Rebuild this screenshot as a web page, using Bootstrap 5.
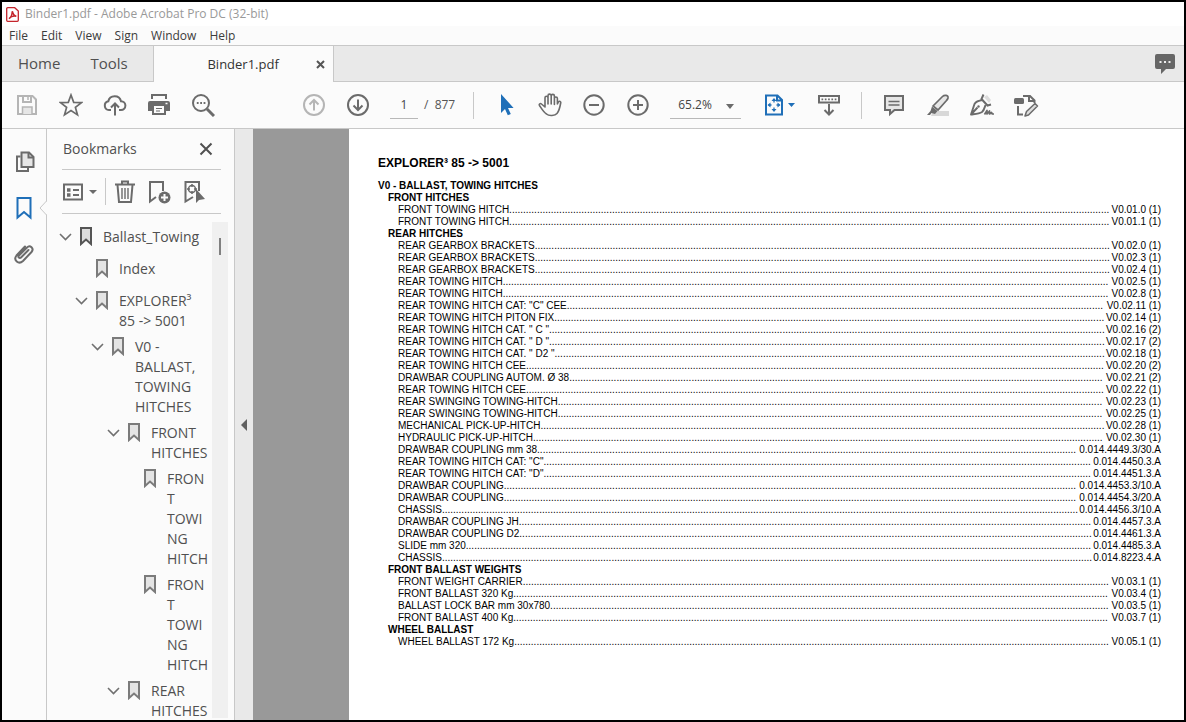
<!DOCTYPE html>
<html lang="en">
<head>
<meta charset="utf-8">
<meta name="viewport" content="width=device-width, initial-scale=1">
<title>Binder1.pdf - Adobe Acrobat Pro DC (32-bit)</title>
<link rel="stylesheet" href="https://cdn.jsdelivr.net/npm/bootstrap@5.3.0/dist/css/bootstrap.min.css">
<style>
  :root { --ink: #6b6b6b; --line: #c8c8c8; --blue: #1f6fb8; --chrome: #fbfbfb; }
  body { font-family: "Open Sans", "Noto Sans", sans-serif; color: #444; background: var(--chrome); border: 2px solid #000; font-size: 12px; line-height: 20px; }
  button, select, input { font: inherit; color: inherit; }
  button { background: none; border: 0; padding: 0; }
  svg { display: block; fill: none; stroke: currentColor; stroke-width: 2; flex: none; }
  a { color: inherit; text-decoration: none; }

  .title-bar { height: 24px; color: #999; background: #fff; padding-left: 4px; gap: 6px; }
  .menu-bar { height: 19px; padding-left: 7px; gap: 13px; line-height: 18px; color: #3c3c3c; }

  .tab-strip { height: 37px; background: #e9e9e9; border-top: 1px solid var(--line); border-bottom: 1px solid var(--line); }
  .tab-strip .app-tab { font-size: 15px; color: #505050; padding: 0 26px 2px 16px; }
  .tab-strip .app-tab + .app-tab { padding: 0 25px 2px 4px; }
  .doc-tab { width: 181px; height: 36px; margin-bottom: -1px; background: var(--chrome); border: 1px solid var(--line); border-width: 0 1px; font-size: 13px; color: #333; }
  .doc-tab button { color: #555; }

  .tool-bar { height: 47px; border-bottom: 1px solid var(--line); color: var(--ink); }
  .tool { width: 44px; height: 46px; display: flex; align-items: center; justify-content: center; flex: none; }
  .file-tools { margin-left: 3px; }
  .page-tools { margin: 0 10px 0 67px; }
  .page-total { margin: 0 18px 0 6px; color: #555; }
  .view-tools, .note-tools { margin-left: 10px; }
  .scroll-tool { margin: 0 10px 0 6px; }
  .is-off { color: #b5b5b5; }
  .is-blue { color: var(--blue); }
  .rule { width: 1px; height: 27px; background: var(--line); flex: none; }
  .field { height: 27px; border: 0; border-bottom: 1px solid #b8b8b8; background: none; border-radius: 0; padding: 0; color: #444; appearance: none; }
  .page-field { width: 28px; text-align: center; }
  .zoom-wrap { width: 71px; margin: 0 16px 0 10px; }
  .zoom-wrap .field { width: 100%; padding-left: 8px; }
  .zoom-wrap svg { right: 7px; top: 12px; pointer-events: none; }
  svg.caret { fill: currentColor; stroke: none; }

  .rail { width: 45px; border-right: 1px solid var(--line); padding: 10px 0 0; color: var(--ink); }
  .rail button { width: 44px; height: 46px; display: flex; align-items: center; justify-content: center; }
  .notch { right: -1px; top: 72px; }
  .panel { width: 188px; border-right: 1px solid var(--line); }
  .panel-head { height: 41px; margin: 0 13px 0 15px; border-bottom: 1px solid var(--line); font-size: 14px; color: #505050; padding: 0 8px 0 1px; }
  .panel-tools { height: 44px; margin: 0 13px 0 15px; border-bottom: 1px solid var(--line); color: var(--ink); }
  .tree-wrap { padding-top: 7px; }
  .tree { font-size: 14px; color: #505050; padding: 3px 2px 0 10px; min-width: 0; }
  .tree ul { list-style: none; margin: 0; padding-left: 16px; }
  .tree-row { display: flex; min-height: 32px; padding: 3px 0; align-items: flex-start; }
  .tree-row .twist { width: 16px; height: 20px; margin-right: 6px; color: #707070; display: flex; align-items: center; justify-content: center; flex: none; }
  .tree-row a { flex: 1; min-width: 0; margin-left: 10px; overflow-wrap: anywhere; }
  .tree-row > svg { stroke: #7b7b7b; fill: #e4e4e4; margin-top: -1px; }
  .tree-row.is-current > svg { stroke: #555; fill: #dcdcdc; }
  .scroll-track { width: 16px; margin: 1px 6px 2px 0; background: #f0f0f0; }
  .scroll-thumb { width: 2px; height: 17px; margin: 16px 0 0 7px; background: #808080; }

  .collapse-strip { width: 18px; background: #e9e9e9; color: #606060; padding-right: 1px; }
  .desk { background: #999; padding-left: 96px; min-width: 0; }
  .sheet { background: #fff; color: #000; font: 10px/12px "Liberation Sans", Arial, sans-serif; padding: 27px 23px 0 29px; }
  .sheet h1 { font-size: 12px; line-height: 14px; font-weight: 700; margin: 0 0 10px; }
  .sheet h2, .sheet h3 { font-size: 10px; line-height: 12px; font-weight: 700; margin: 0; }
  .sheet h3 { padding-left: 10px; }
  .sheet ul { list-style: none; margin: 0; padding: 0 0 0 20px; }
  .sheet li a { display: flex; white-space: nowrap; }
  .leader { flex: 1 1 0; min-width: 0; }
</style>
</head>
<body class="vh-100 d-flex flex-column overflow-hidden">

<header>
  <div class="title-bar d-flex align-items-center">
    <svg width="13" height="15" viewBox="0 0 13 15" style="color:#c4242b"><path stroke-width="1.3" fill="#fff" d="M1.7.7h7L12.300 4v9.300a1 1 0 0 1-1 1H1.700a1 1 0 0 1-1-1V1.700a1 1 0 0 1 1-1z"/><path stroke-width="1.500" d="M3 11.500c1.500-.5 3-3.500 3.300-7.200C7 7 8 9 10.300 9.300 8 8.500 5 9.500 3 11.500z"/></svg>
    <span>Binder1.pdf - Adobe Acrobat Pro DC (32-bit)</span>
  </div>
  <nav class="menu-bar d-flex align-items-center" aria-label="Menu">
    <button>File</button><button>Edit</button><button>View</button><button>Sign</button><button>Window</button><button>Help</button>
  </nav>
  <nav class="tab-strip d-flex" aria-label="Tabs">
    <button class="app-tab">Home</button>
    <button class="app-tab">Tools</button>
    <div class="doc-tab d-flex align-items-center position-relative justify-content-center">
      <span>Binder1.pdf</span>
      <button class="position-absolute end-0 me-2" aria-label="Close tab"><svg width="9" height="9" viewBox="0 0 9 9"><path d="M1 1l7 7M8 1L1 8"/></svg></button>
    </div>
    <button class="ms-auto me-2" style="color:#666" aria-label="Comments"><svg width="22" height="22" viewBox="0 0 22 22"><path fill="currentColor" stroke="none" d="M3 1h16a2 2 0 0 1 2 2v11a2 2 0 0 1-2 2h-7l-5 5v-5H3a2 2 0 0 1-2-2V3a2 2 0 0 1 2-2z"/><path stroke="#eee" stroke-dasharray="2 2.500" d="M5.500 9h12"/></svg></button>
  </nav>

  <div class="tool-bar d-flex align-items-center" role="toolbar">
    <div class="d-flex file-tools">
      <button class="tool is-off" aria-label="Save"><svg width="24" height="24" viewBox="0 0 24 24"><path d="M3 3h14.500L21 6.500V21H3zM8 3v6h8V3"/><path stroke-width="1.500" d="M13 4v3"/><path fill="#e6e6e6" stroke-width="1.500" d="M7.500 21v-7h9.500v7"/></svg></button>
      <button class="tool" aria-label="Star"><svg width="24" height="24" viewBox="0 0 24 24"><path stroke-width="1.700" d="M12 2l2.700 7.300 7.800.3-6.100 4.800 2.100 7.500-6.500-4.300-6.500 4.300 2.100-7.500-6.100-4.800 7.800-.3z"/></svg></button>
      <button class="tool" aria-label="Upload"><svg width="24" height="24" viewBox="0 0 24 24"><path d="M8 17H6a4.400 4.400 0 0 1-.7-8.700A6.500 6.500 0 0 1 18 8.200 4.400 4.400 0 0 1 18 17h-2M12 22.500V11M8 14.500l4-4 4 4"/></svg></button>
      <button class="tool" aria-label="Print"><svg width="24" height="24" viewBox="0 0 24 24"><path stroke="none" fill="currentColor" d="M4 1h16v5H4zM3 8h18a2 2 0 0 1 2 2v8h-4v4H5v-4H1v-8a2 2 0 0 1 2-2z"/><path stroke="none" fill="#fbfbfb" d="M6 3h12v3H6zM7 13h10v7H7z"/><path stroke-width="1.200" d="M9 15.500h6M9 18h4"/><path stroke="#fbfbfb" stroke-width="1.500" d="M18.500 10.500h2"/></svg></button>
      <button class="tool" aria-label="Find"><svg width="24" height="24" viewBox="0 0 24 24"><circle cx="10" cy="10" r="8"/><path stroke-width="3" d="M16 16l7 7"/><path stroke-width="1.800" stroke-dasharray="1.800 1.600" d="M5.800 10h9"/></svg></button>
    </div>
    <div class="d-flex page-tools">
      <button class="tool is-off" aria-label="Previous page"><svg width="24" height="24" viewBox="0 0 24 24"><circle cx="12" cy="12" r="10"/><path d="M12 17.500V7M7.500 11.500L12 7l4.500 4.500"/></svg></button>
      <button class="tool" aria-label="Next page"><svg width="24" height="24" viewBox="0 0 24 24"><circle cx="12" cy="12" r="10"/><path d="M12 6.500V17M7.500 12.500L12 17l4.500-4.500"/></svg></button>
    </div>
    <input class="field page-field" aria-label="Page number" value="1">
    <span class="page-total text-nowrap">/&nbsp; 877</span>
    <span class="rule"></span>
    <div class="d-flex view-tools">
      <button class="tool is-blue" aria-label="Select"><svg width="24" height="24" viewBox="0 0 24 24"><path fill="currentColor" stroke="none" d="M7 1v19l4-4 2.800 6.300 3-1.300-2.800-6h5.600z"/></svg></button>
      <button class="tool" aria-label="Pan"><svg width="24" height="24" viewBox="0 0 24 24"><path stroke-width="1.600" stroke-linejoin="round" stroke-linecap="round" d="M7 13.500V4.800a1.500 1.500 0 0 1 3 0V11 2.700a1.500 1.500 0 0 1 3.200 0V11 3a1.500 1.500 0 0 1 3.200 0v8.500V5.500a1.500 1.500 0 0 1 3 0V11l1-2c1-1.300 2.700-.7 2.300 1-.7 4-1.500 8-3.700 10.500-2 2.300-8 2.800-10.500.5C5.500 19.300 3.500 15.500 1.500 12.500c-.8-1.500.8-2.600 2-1.500L7 14"/></svg></button>
      <button class="tool" aria-label="Zoom out"><svg width="24" height="24" viewBox="0 0 24 24"><circle cx="12" cy="12" r="9.700"/><path d="M7 12h10"/></svg></button>
      <button class="tool" aria-label="Zoom in"><svg width="24" height="24" viewBox="0 0 24 24"><circle cx="12" cy="12" r="9.700"/><path d="M7 12h10M12 7v10"/></svg></button>
    </div>
    <div class="zoom-wrap position-relative">
      <select class="field d-block" aria-label="Zoom level"><option>65.2%</option></select>
      <svg class="caret position-absolute" width="8" height="5" viewBox="0 0 8 5"><path d="M0 0h8L4 5z"/></svg>
    </div>
    <button class="tool is-blue gap-1" aria-label="Fit page"><svg width="20" height="24" viewBox="0 0 20 24"><path d="M2 2.500h11.500L18 7v14.500H2zM13 3v4.500h5"/><path stroke-width="1.300" d="M10 6.500v3M10 14.500v3M4.500 12h3M12.500 12h3"/><path stroke="none" fill="currentColor" d="M10 5l2.500 3h-5zM10 19l2.500-3h-5zM3.500 12l3-2.500v5zM16.500 12l-3-2.500v5z"/></svg><svg class="caret" width="7" height="4" viewBox="0 0 7 4"><path d="M0 0h7L3.500 4z"/></svg></button>
    <button class="tool scroll-tool" aria-label="Scroll mode"><svg width="24" height="24" viewBox="0 0 24 24"><path d="M2 3h20v6.500H2zM12 11v10M7.500 17l4.500 4.500 4.500-4.500"/><path stroke-width="1.700" stroke-dasharray="1.700 1.600" d="M4.500 6.300h15"/></svg></button>
    <span class="rule"></span>
    <div class="d-flex note-tools">
      <button class="tool" aria-label="Comment"><svg width="24" height="24" viewBox="0 0 24 24"><path fill="#e6e6e6" d="M3 3h18v14h-8.500L8 21v-4H3z"/><path stroke-width="1.500" d="M6.500 8.500h11M6.500 12h11"/></svg></button>
      <button class="tool" aria-label="Highlight"><svg width="24" height="24" viewBox="0 0 24 24"><path fill="#d8d8d8" stroke="none" d="M7 18h16v5H5z"/><path fill="#e6e6e6" stroke-width="1.700" d="M7 13L16.500 3.500c2-2 6-1.500 5.500 1.500-.2 1-.7 1.500-1.500 2.500L12 17z"/><path fill="currentColor" stroke="none" d="M6 13.500l5.500 4.500-2.500 3-3.500-1-1.500 2H1l3.500-4z"/></svg></button>
      <button class="tool" aria-label="Sign"><svg width="26" height="24" viewBox="0 0 26 24"><path fill="#ddd" stroke="none" d="M15 4l3-2 4 5-2 3z"/><path stroke-width="1.900" stroke-linejoin="round" d="M13.500 7C10 7.500 7 8.500 5.500 11L2 21.500c4-.5 8-.5 11-2.500 2-1.500 2.500-4 3.500-7M2 21.500l6.500-7"/><circle cx="9.500" cy="13.500" r="1.200" fill="currentColor" stroke="none"/><path d="M14.500 1.500l-2 4.500 6 6.500 3.500-1"/><path stroke-width="1.700" stroke-linejoin="round" d="M15.500 21.500l2.500-4v3.500l2.500-3v3l2-1.500.8 1.500H25"/></svg></button>
      <button class="tool" aria-label="Edit tools"><svg width="26" height="24" viewBox="0 0 26 24"><path d="M10 3h7l4.500 4.500V10M16 3v5h5M5 13v8.500h5"/><rect x="1" y="5" width="10" height="6" rx="1.500" fill="currentColor" stroke="none"/><path fill="#ddd" stroke-width="1.500" stroke-linejoin="round" d="M12 23l1.500-4.500L22 10.500l2.500 2.500-9 9z"/></svg></button>
    </div>
  </div>
</header>

<main class="d-flex flex-grow-1" style="min-height:0">
  <nav class="rail position-relative flex-shrink-0" aria-label="Panels">
    <button aria-label="Thumbnails"><svg width="22" height="24" viewBox="0 0 22 24"><path fill="#e6e6e6" d="M8.500 2.500h7.500l4.500 4.500v10h-12z"/><path d="M15.500 2.500v5h5M7.500 6.500H4v14.500h11v-3.500"/></svg></button>
    <button class="is-blue" aria-label="Bookmarks"><svg width="18" height="24" viewBox="0 0 18 24"><path d="M2.500 2h13v19.500l-6.500-5.500-6.500 5.500z"/></svg></button>
    <button aria-label="Attachments"><svg width="22" height="24" viewBox="0 0 22 24"><path stroke-linecap="round" d="M15.500 8L8 15.500c-1.500 1.500-3.500-.5-2-2L14 5.500c3-3 7.500 1 4.500 4.500L10 19c-4.500 4-10-1-6.500-5.500L12 4.500"/></svg></button>
    <svg class="notch position-absolute" width="8" height="14" viewBox="0 0 8 14" style="stroke:#c8c8c8;stroke-width:1"><path fill="#fbfbfb" stroke="none" d="M8 0v14L1 7z"/><path d="M7.500 0L1 7l6.500 7"/></svg>
  </nav>

  <aside class="panel d-flex flex-column flex-shrink-0">
    <div class="panel-head d-flex align-items-center justify-content-between flex-shrink-0">
      <span>Bookmarks</span>
      <button aria-label="Close panel"><svg width="14" height="14" viewBox="0 0 14 14"><path d="M1.500 1.500l11 11M12.500 1.500l-11 11"/></svg></button>
    </div>
    <div class="panel-tools d-flex align-items-center flex-shrink-0">
      <button class="d-flex align-items-center" style="gap:5px" aria-label="Options"><svg width="22" height="20" viewBox="0 0 22 20"><path d="M2 2.500h18v15H2z"/><path d="M11 8h6M11 13h6"/><path stroke-width="3.500" d="M5 8h3.500M5 13h3.500"/></svg><svg class="caret" width="8" height="4" viewBox="0 0 8 4"><path d="M0 0h8L4 4z"/></svg></button>
      <span class="rule ms-2 me-2"></span>
      <button aria-label="Delete"><svg width="22" height="24" viewBox="0 0 22 24"><path d="M1 4.500h20M8 4V1.500h6V4M3.500 5L5 22h12l1.500-17"/><path stroke-width="1.400" d="M8 8v11M11 8v11M14 8v11"/></svg></button>
      <button style="margin:0 11px" aria-label="New bookmark"><svg width="24" height="24" viewBox="0 0 24 24"><path d="M9 17l-6 4.500V2h13v9"/><circle cx="17.500" cy="17.500" r="6" fill="currentColor" stroke="none"/><path stroke="#fbfbfb" d="M17.500 14v7M14 17.500h7"/></svg></button>
      <button aria-label="Locate bookmark"><svg width="24" height="24" viewBox="0 0 24 24"><path d="M11 17l-7.500 4.500V2H17v9"/><circle cx="10" cy="9" r="3.500" stroke-width="1.500"/><path stroke-width="1.500" d="M10 4v3M10 11v3M5 9h3M12 9h3"/><path stroke="none" fill="currentColor" d="M14 9v14l3-3 6-1z"/></svg></button>
    </div>
    <div class="tree-wrap d-flex flex-grow-1 overflow-hidden">
      <div class="tree flex-grow-1" id="tree"></div>
      <div class="scroll-track flex-shrink-0"><div class="scroll-thumb"></div></div>
    </div>
  </aside>

  <button class="collapse-strip d-flex align-items-center justify-content-center flex-shrink-0" aria-label="Collapse panel"><svg class="caret" width="6" height="12" viewBox="0 0 6 12"><path d="M6 0v12L0 6z"/></svg></button>

  <section class="desk flex-grow-1 d-flex">
    <article class="sheet flex-grow-1 overflow-hidden" id="sheet">
      <h1>EXPLORER³ 85 -&gt; 5001</h1>
      <h2>V0 - BALLAST, TOWING HITCHES</h2>
    </article>
  </section>
</main>

<script src="https://cdn.jsdelivr.net/npm/bootstrap@5.3.0/dist/js/bootstrap.bundle.min.js"></script>
<script>
  const sections = [
    ['FRONT HITCHES', [['FRONT TOWING HITCH', 'V0.01.0 (1)'], ['FRONT TOWING HITCH', 'V0.01.1 (1)']]],
    ['REAR HITCHES', [
      ['REAR GEARBOX BRACKETS', 'V0.02.0 (1)'], ['REAR GEARBOX BRACKETS', 'V0.02.3 (1)'], ['REAR GEARBOX BRACKETS', 'V0.02.4 (1)'],
      ['REAR TOWING HITCH', 'V0.02.5 (1)'], ['REAR TOWING HITCH', 'V0.02.8 (1)'],
      ['REAR TOWING HITCH CAT: "C" CEE', 'V0.02.11 (1)'], ['REAR TOWING HITCH PITON FIX', 'V0.02.14 (1)'],
      ['REAR TOWING HITCH CAT. " C "', 'V0.02.16 (2)'], ['REAR TOWING HITCH CAT. " D "', 'V0.02.17 (2)'], ['REAR TOWING HITCH CAT. " D2 "', 'V0.02.18 (1)'],
      ['REAR TOWING HITCH CEE', 'V0.02.20 (2)'], ['DRAWBAR COUPLING AUTOM. Ø 38', 'V0.02.21 (2)'], ['REAR TOWING HITCH CEE', 'V0.02.22 (1)'],
      ['REAR SWINGING TOWING-HITCH', 'V0.02.23 (1)'], ['REAR SWINGING TOWING-HITCH', 'V0.02.25 (1)'],
      ['MECHANICAL PICK-UP-HITCH', 'V0.02.28 (1)'], ['HYDRAULIC PICK-UP-HITCH', 'V0.02.30 (1)'],
      ['DRAWBAR COUPLING mm 38', '0.014.4449.3/30.A'], ['REAR TOWING HITCH CAT: "C"', '0.014.4450.3.A'], ['REAR TOWING HITCH CAT: "D"', '0.014.4451.3.A'],
      ['DRAWBAR COUPLING', '0.014.4453.3/10.A'], ['DRAWBAR COUPLING', '0.014.4454.3/20.A'], ['CHASSIS', '0.014.4456.3/10.A'],
      ['DRAWBAR COUPLING JH', '0.014.4457.3.A'], ['DRAWBAR COUPLING D2', '0.014.4461.3.A'], ['SLIDE mm 320', '0.014.4485.3.A'], ['CHASSIS', '0.014.8223.4.A']]],
    ['FRONT BALLAST WEIGHTS', [['FRONT WEIGHT CARRIER', 'V0.03.1 (1)'], ['FRONT BALLAST 320 Kg', 'V0.03.4 (1)'], ['BALLAST LOCK BAR mm 30x780', 'V0.03.5 (1)'], ['FRONT BALLAST 400 Kg', 'V0.03.7 (1)']]],
    ['WHEEL BALLAST', [['WHEEL BALLAST 172 Kg', 'V0.05.1 (1)']]]
  ];
  document.getElementById('sheet').insertAdjacentHTML('beforeend', sections.map(([head, rows]) =>
    `<h3>${head}</h3><ul>` + rows.map(([name, ref]) =>
      `<li><a href="#"><span>${name}</span><span class="leader" aria-hidden="true"></span><span>${ref}</span></a></li>`).join('') + '</ul>').join(''));

  // Fill every leader with as many whole dots as its row has room for.
  const pen = document.createElement('canvas').getContext('2d');
  pen.font = '10px "Liberation Sans", Arial, sans-serif';
  const dotWidth = pen.measureText('.'.repeat(100)).width / 100;
  function fillLeaders() {
    document.querySelectorAll('.leader').forEach(el => {
      el.textContent = '.'.repeat(Math.max(0, Math.floor((el.getBoundingClientRect().width - 1) / dotWidth)));
    });
  }
  fillLeaders();
  addEventListener('resize', fillLeaders);

  const bookmarks = { t: 'Ballast_Towing', now: true, kids: [
    { t: 'Index' },
    { t: 'EXPLORER³ 85 -> 5001', kids: [
      { t: 'V0 - BALLAST, TOWING HITCHES', kids: [
        { t: 'FRONT HITCHES', kids: [{ t: 'FRONT TOWING HITCH' }, { t: 'FRONT TOWING HITCH' }] },
        { t: 'REAR HITCHES', kids: [] }] }] }] };
  const chevron = '<svg width="13" height="8" viewBox="0 0 13 8"><path stroke-width="1.600" d="M1 1l5.500 5.500L12 1"/></svg>';
  const flag = '<svg width="14" height="20" viewBox="0 0 14 20"><path d="M2 2h10v16l-5-4.500L2 18z"/></svg>';
  const node = n => `<li><div class="tree-row${n.now ? ' is-current' : ''}">` +
    (n.kids ? `<button class="twist" aria-label="Toggle">${chevron}</button>` : '<span class="twist"></span>') +
    `${flag}<a href="#">${n.t.replace('>', '&gt;')}</a></div>` +
    (n.kids && n.kids.length ? `<ul>${n.kids.map(node).join('')}</ul>` : '') + '</li>';
  document.getElementById('tree').innerHTML = `<ul class="p-0">${node(bookmarks)}</ul>`;
</script>
</body>
</html>
